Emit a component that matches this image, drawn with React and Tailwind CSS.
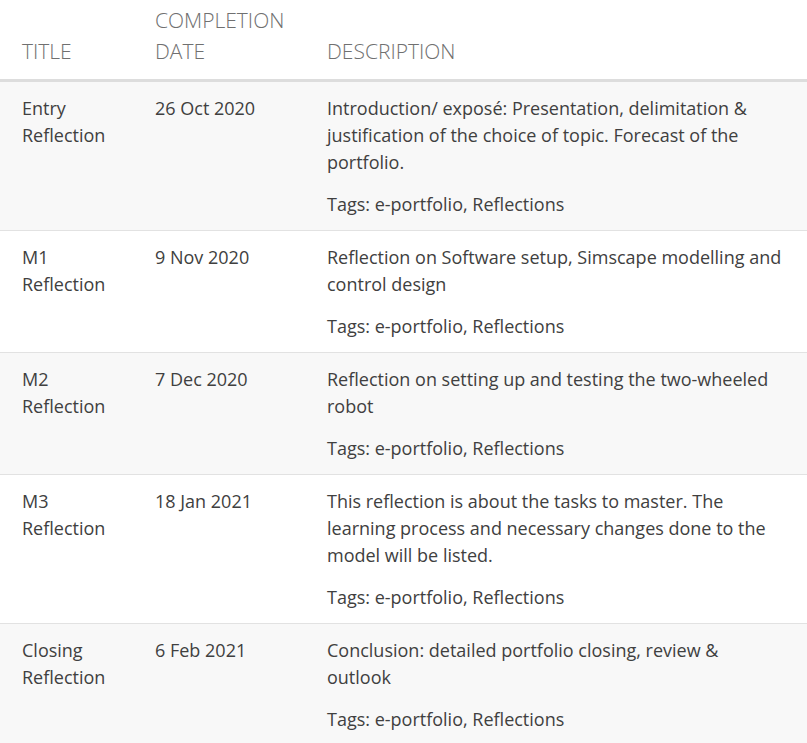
const rows = [
  {
    title: ['Entry', 'Reflection'],
    date: '26 Oct 2020',
    desc: 'Introduction/ exposé: Presentation, delimitation & justification of the choice of topic. Forecast of the portfolio.',
  },
  {
    title: ['M1', 'Reflection'],
    date: '9 Nov 2020',
    desc: 'Reflection on Software setup, Simscape modelling and control design',
  },
  {
    title: ['M2', 'Reflection'],
    date: '7 Dec 2020',
    desc: 'Reflection on setting up and testing the two-wheeled robot',
  },
  {
    title: ['M3', 'Reflection'],
    date: '18 Jan 2021',
    desc: 'This reflection is about the tasks to master. The learning process and necessary changes done to the model will be listed.',
  },
  {
    title: ['Closing', 'Reflection'],
    date: '6 Feb 2021',
    desc: 'Conclusion: detailed portfolio closing, review & outlook',
  },
];

function App() {
  return (
    <div className="min-h-[743px] bg-white font-['Open_Sans',sans-serif] text-[18px] leading-[27px] text-[#404040]">
      <table className="w-full table-fixed border-collapse">
        <colgroup>
          <col className="w-[133px]" />
          <col className="w-[172px]" />
          <col />
        </colgroup>
        <thead>
          <tr className="border-b-[3px] border-[#dddddd]">
            <th className="px-[22px] pt-[5px] pb-[12px] text-left align-bottom text-[21px] leading-[31px] font-light uppercase text-[#707070]">
              Title
            </th>
            <th className="pl-[22px] pr-[10px] pt-[5px] pb-[12px] text-left align-bottom text-[21px] leading-[31px] font-light uppercase text-[#707070]">
              Completion Date
            </th>
            <th className="px-[22px] pt-[5px] pb-[12px] text-left align-bottom text-[21px] leading-[31px] font-light uppercase text-[#707070]">
              Description
            </th>
          </tr>
        </thead>
        <tbody>
          {rows.map((row, index) => (
            <tr
              key={index}
              className={`border-b border-[#e2e2e2] ${index % 2 === 0 ? 'bg-[#f8f8f8]' : 'bg-white'}`}
            >
              <td className="px-[22px] pt-[13px] pb-[12px] align-top">
                {row.title[0]}
                <br />
                {row.title[1]}
              </td>
              <td className="px-[22px] pt-[13px] pb-[12px] align-top">{row.date}</td>
              <td className="pl-[22px] pr-[20px] pt-[13px] pb-[12px] align-top">
                <p>{row.desc}</p>
                <p className="mt-[15px]">Tags: e-portfolio, Reflections</p>
              </td>
            </tr>
          ))}
        </tbody>
      </table>
    </div>
  );
}

export default App;
